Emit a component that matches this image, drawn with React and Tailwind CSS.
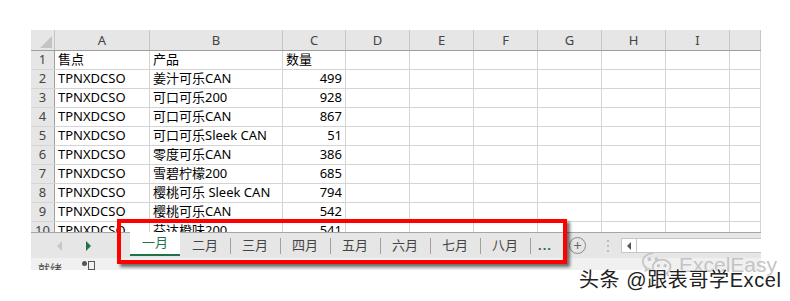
const cols = [
  { name: "A", w: "w-[95px]" },
  { name: "B", w: "w-[133px]" },
  { name: "C", w: "w-[63px]" },
  { name: "D", w: "w-[64px]" },
  { name: "E", w: "w-[64px]" },
  { name: "F", w: "w-[64px]" },
  { name: "G", w: "w-[64px]" },
  { name: "H", w: "w-[64px]" },
  { name: "I", w: "w-[64px]" },
  { name: "J", w: "flex-1" },
];

const rows = [
  ["售点", "产品", "数量"],
  ["TPNXDCSO", "姜汁可乐CAN", 499],
  ["TPNXDCSO", "可口可乐200", 928],
  ["TPNXDCSO", "可口可乐CAN", 867],
  ["TPNXDCSO", "可口可乐Sleek CAN", 51],
  ["TPNXDCSO", "零度可乐CAN", 386],
  ["TPNXDCSO", "雪碧柠檬200", 685],
  ["TPNXDCSO", "樱桃可乐 Sleek CAN", 794],
  ["TPNXDCSO", "樱桃可乐CAN", 542],
  ["TPNXDCSO", "芬达橙味200", 541],
];

const tabs = ["一月", "二月", "三月", "四月", "五月", "六月", "七月", "八月"];

function WeChatIcon() {
  return (
    <svg width="33" height="26" viewBox="0 0 30 24" fill="none" stroke="#c4c4c4" strokeWidth="1.6">
      <path d="M11 2C5.5 2 1.5 5.4 1.5 9.6c0 2.4 1.3 4.5 3.4 5.9l-.8 2.6 3-1.6c1.2.4 2.5.6 3.9.6" />
      <path d="M19 8c-4.6 0-8.3 2.9-8.3 6.6s3.7 6.6 8.3 6.6c1 0 2-.1 2.9-.4l2.6 1.4-.7-2.3c1.9-1.2 3.2-3.1 3.2-5.3C27.3 10.9 23.6 8 19 8z" />
      <circle cx="7.5" cy="7.5" r="0.9" fill="#c4c4c4" />
      <circle cx="14" cy="7.5" r="0.9" fill="#c4c4c4" />
      <circle cx="16" cy="13.5" r="0.8" fill="#c4c4c4" />
      <circle cx="22" cy="13.5" r="0.8" fill="#c4c4c4" />
    </svg>
  );
}

export default function App() {
  return (
    <div className="relative w-[790px] h-[301px] bg-white overflow-hidden font-['Noto_Sans','Noto_Sans_CJK_SC',sans-serif] text-[13px] text-black">
      <div className="ml-[31px] mt-[30px] w-[730px]">
        {/* column header */}
        <div className="flex h-[21px] bg-[#e6e6e6] border-b border-[#9e9e9e]">
          <div className="relative w-[24px] border-r border-[#c6c6c6]">
            <div className="absolute right-[2px] bottom-[2px] w-0 h-0 border-l-[12px] border-l-transparent border-b-[12px] border-b-[#c3c3c3]" />
          </div>
          {cols.map((c) => (
            <div
              key={c.name}
              className={`${c.w} flex items-center justify-center border-r border-[#c6c6c6] text-[#444] leading-none`}
            >
              {c.name !== "J" ? c.name : ""}
            </div>
          ))}
        </div>

        {/* rows */}
        <div className="h-[181px] overflow-hidden">
          {rows.map((r, i) => (
            <div key={i} className="flex h-[19px] border-b border-[#d4d4d4]">
              <div className="w-[24px] shrink-0 flex items-center justify-center bg-[#e6e6e6] border-r border-[#9e9e9e] text-[#444]">
                {i + 1}
              </div>
              {cols.map((c, j) => (
                <div
                  key={c.name}
                  className={`${c.w} flex items-center border-r border-[#d4d4d4] whitespace-nowrap ${
                    j === 2 && i > 0 ? "justify-end pr-[3px]" : "pl-[3px]"
                  }`}
                >
                  {j < 3 ? r[j] : ""}
                </div>
              ))}
            </div>
          ))}
        </div>

        {/* sheet tab bar */}
        <div className="flex h-[26px] bg-[#e6e6e6] border-t border-[#a6a6a6]">
          <div className="w-[99px] flex items-center">
            <div className="ml-[26px] w-0 h-0 border-y-[5px] border-y-transparent border-r-[5px] border-r-[#c8c8c8]" />
            <div className="ml-[24px] w-0 h-0 border-y-[5px] border-y-transparent border-l-[5px] border-l-[#217346]" />
          </div>
          {tabs.map((t, i) => (
            <div
              key={t}
              className={`relative w-[50px] flex items-center justify-center ${
                i === 0 ? "bg-white text-[#217346] -mt-px border-b-2 border-[#217346] h-[24px]" : "text-[#444]"
              }`}
            >
              {i > 1 && <div className="absolute left-0 top-[5px] h-[16px] w-px bg-[#a0a0a0]" />}
              {t}
            </div>
          ))}
          <div className="relative w-[30px] flex items-center justify-center text-[#217346] font-bold tracking-[1px]">
            <div className="absolute left-0 top-[5px] h-[16px] w-px bg-[#a0a0a0]" />
            ...
          </div>
          <div className="w-[35px] flex items-center justify-center">
            <div className="w-[17px] h-[17px] rounded-full border border-[#8a8a8a] flex items-center justify-center text-[#6a6a6a] text-[15px] leading-none">
              +
            </div>
          </div>
          <div className="w-[26px] flex flex-col items-center justify-center gap-[3px]">
            <div className="w-[2px] h-[2px] bg-[#bcbcbc]" />
            <div className="w-[2px] h-[2px] bg-[#bcbcbc]" />
            <div className="w-[2px] h-[2px] bg-[#bcbcbc]" />
          </div>
          <div className="flex-1 flex items-center">
            <div className="flex-1 h-[15px] flex bg-white border-y border-l border-[#c6c6c6]">
              <div className="w-[15px] flex items-center justify-center border-r border-[#c6c6c6]">
                <div className="w-0 h-0 border-y-[4px] border-y-transparent border-r-[4px] border-r-[#555]" />
              </div>
            </div>
          </div>
        </div>

        {/* status bar, cut off by the screenshot edge */}
        <div className="h-[12px] bg-[#f0f0f0] overflow-hidden flex items-start text-[#444] text-[12px]">
          <span className="ml-[7px] mt-[6px] leading-none">就绪</span>
          <div className="ml-[20px] mt-[3px] flex items-start gap-[1px]">
            <div className="w-[5px] h-[5px] rounded-full bg-[#555]" />
            <div className="w-[7px] h-[9px] border border-[#555]" />
          </div>
        </div>
      </div>

      {/* highlight */}
      <div className="absolute left-[117px] top-[219px] w-[450px] h-[45px] border-[4px] border-[#ff0000] shadow-[3px_3px_3px_rgba(0,0,0,0.55)]" />

      {/* watermark */}
      <div className="absolute left-[641px] top-[251px] flex items-center gap-[5px]">
        <WeChatIcon />
        <span className="text-[#c4c4c4] text-[21px] leading-none font-['Liberation_Sans',sans-serif]">ExcelEasy</span>
      </div>
      <div className="absolute left-[579px] top-[270px] text-[20px] tracking-[0.6px] leading-none text-[#222] font-['Liberation_Sans','Noto_Sans_CJK_SC',sans-serif] [text-shadow:0_0_2px_#fff,0_0_2px_#fff,0_0_1px_#fff]">
        头条 @跟表哥学Excel
      </div>
    </div>
  );
}
